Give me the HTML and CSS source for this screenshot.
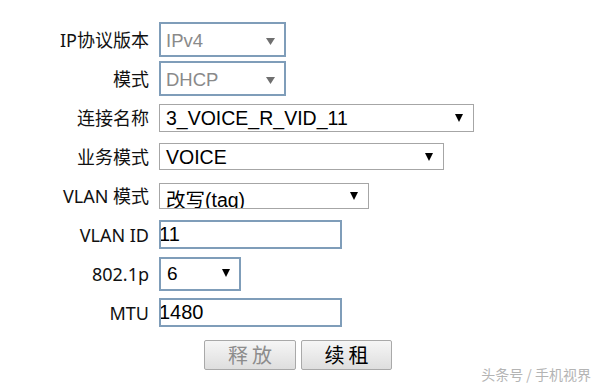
FILE: index.html
```html
<!DOCTYPE html>
<html lang="zh">
<head>
<meta charset="utf-8">
<title>WAN</title>
<link rel="stylesheet" href="styles.css">
</head>
<body>
<div class="page">
  <div class="form">
    <div class="lbl">IP协议版本</div>
    <div class="ctl dis w-ver"><span class="val">IPv4</span><svg class="arr" width="9" height="7" viewBox="0 0 9 7"><polygon points="0,0 9,0 4.5,7"/></svg></div>

    <div class="lbl">模式</div>
    <div class="ctl dis w-ver"><span class="val">DHCP</span><svg class="arr" width="9" height="7" viewBox="0 0 9 7"><polygon points="0,0 9,0 4.5,7"/></svg></div>

    <div class="lbl">连接名称</div>
    <div class="ctl sel w-conn h28"><span class="val">3_VOICE_R_VID_11</span><svg class="arr" width="8" height="8" viewBox="0 0 8 8"><polygon points="0,0 8,0 4,8"/></svg></div>

    <div class="lbl">业务模式</div>
    <div class="ctl sel w-svc h27"><span class="val">VOICE</span><svg class="arr" width="8" height="8" viewBox="0 0 8 8"><polygon points="0,0 8,0 4,8"/></svg></div>

    <div class="lbl">VLAN 模式</div>
    <div class="ctl sel w-vmode h26"><span class="val low">改写(tag)</span><svg class="arr" width="8" height="8" viewBox="0 0 8 8"><polygon points="0,0 8,0 4,8"/></svg></div>

    <div class="lbl">VLAN ID</div>
    <div class="ctl inp w-id"><span class="val">11</span></div>

    <div class="lbl">802.1p</div>
    <div class="ctl pri w-pri"><span class="val">6</span><svg class="arr" width="8" height="8" viewBox="0 0 8 8"><polygon points="0,0 8,0 4,8"/></svg></div>

    <div class="lbl">MTU</div>
    <div class="ctl inp w-id"><span class="val">1480</span></div>
  </div>

  <div class="actions">
    <button class="btn btn-dis" type="button">释放</button>
    <button class="btn" type="button">续租</button>
  </div>

  <div class="wm">头条号 / 手机视界</div>
</div>
</body>
</html>
```

FILE: styles.css
```css
html, body {
  margin: 0;
  padding: 0;
  background: #ffffff;
}

.page {
  position: relative;
  width: 604px;
  height: 387px;
  overflow: hidden;
  font-family: "Noto Sans", "Noto Sans CJK SC", sans-serif;
  color: #111111;
}

.form {
  display: grid;
  grid-template-columns: 149px auto;
  column-gap: 10px;
  grid-auto-rows: 39px;
  align-items: center;
  justify-items: start;
  padding-top: 20px;
}

.lbl {
  justify-self: end;
  font-size: 18px;
  line-height: 24px;
  white-space: nowrap;
  color: #111111;
}

.ctl {
  box-sizing: border-box;
  display: flex;
  align-items: center;
  justify-content: space-between;
  background: #ffffff;
  overflow: hidden;
  font-family: "Liberation Sans", "Noto Sans CJK SC", sans-serif;
  color: #000000;
  white-space: nowrap;
}

.val {
  display: block;
  line-height: 23px;
}

.arr {
  flex: none;
  margin-right: 10px;
  fill: #000000;
}

/* disabled selects */
.dis {
  height: 35px;
  border: 2px solid #7f9db9;
  font-size: 18.5px;
  color: #8a8a8a;
  padding-left: 5px;
}
.dis .val { margin-top: 2px; }
.dis .arr {
  fill: #6f6f6f;
  margin-right: 9px;
  margin-top: 3px;
}

/* normal selects */
.sel {
  border: 1px solid #a6a6a6;
  font-size: 19.5px;
  padding-left: 6px;
}
.h28 { height: 28px; }
.h28 .val { margin-top: 2px; }
.h27 { height: 27px; }
.h27 .val { margin-top: 1px; }
.h26 { height: 26px; }
.sel .val.low {
  align-self: flex-start;
  padding-top: 5px;
}
.sel .arr { margin-right: 10px; }

/* text inputs */
.inp {
  height: 29px;
  border: 2px solid #7f9db9;
  font-size: 20px;
  padding-left: 0;
}
.inp .val { text-indent: -2px; }

/* priority select */
.pri {
  height: 34px;
  border: 2px solid #7f9db9;
  font-size: 19px;
  padding-left: 6px;
}
.pri .arr { margin-right: 9px; margin-top: -1px; }

.w-ver { width: 127px; }
.w-conn { width: 315px; }
.w-svc { width: 285px; }
.w-vmode { width: 210px; }
.w-id { width: 183px; }
.w-pri { width: 82px; }

.actions {
  display: flex;
  gap: 5px;
  padding-left: 204px;
  margin-top: 8px;
}

.btn {
  box-sizing: border-box;
  width: 92px;
  height: 30px;
  margin: 0;
  padding: 0 0 0 4px;
  border: 1px solid #a9a9a9;
  border-radius: 2px;
  background: linear-gradient(#f6f6f6, #dedede);
  font-family: "Noto Sans CJK SC", sans-serif;
  font-size: 20px;
  line-height: 28px;
  letter-spacing: 4px;
  color: #000000;
}
.btn + .btn { width: 91px; }
.btn-dis { color: #8c8c8c; }

.wm {
  position: absolute;
  right: 13px;
  bottom: 3px;
  font-family: "Noto Sans CJK SC", sans-serif;
  font-size: 14px;
  line-height: 20px;
  color: #b4b4b4;
  text-shadow: 0 0 1px rgba(255, 255, 255, 0.9);
  white-space: nowrap;
}
```
